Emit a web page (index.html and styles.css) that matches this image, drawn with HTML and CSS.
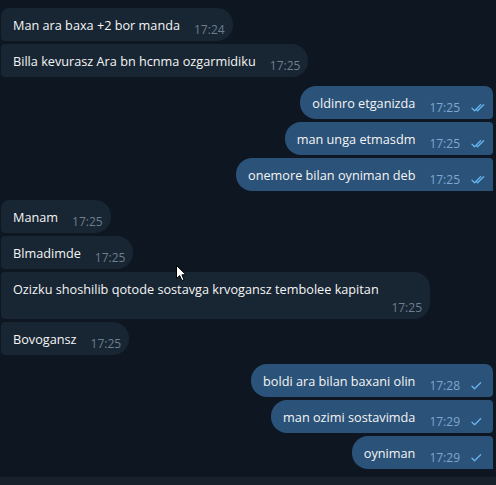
FILE: index.html
```html
<!DOCTYPE html>
<html lang="en">
<head>
  <meta charset="UTF-8">
  <meta name="viewport" content="width=device-width, initial-scale=1.0">
  <title>Chat</title>
  <link rel="stylesheet" href="styles.css">
</head>
<body>
  <main class="chat">
    <!-- incoming group -->
    <div class="group">
      <div class="msg in first"><span class="text">Man ara baxa +2 bor manda</span><span class="meta"><span class="time">17:24</span></span></div>
      <div class="msg in"><span class="text">Billa kevurasz Ara bn hcnma ozgarmidiku</span><span class="meta"><span class="time">17:25</span></span></div>
    </div>

    <!-- outgoing group -->
    <div class="group">
      <div class="msg out first"><span class="text">oldinro etganizda</span><span class="meta"><span class="time">17:25</span><svg class="check" viewBox="0 0 16 8"><path d="M1 4.2l2.6 2.6 6-6M5.4 5.6l1.2 1.2 6-6"/></svg></span></div>
      <div class="msg out"><span class="text">man unga etmasdm</span><span class="meta"><span class="time">17:25</span><svg class="check" viewBox="0 0 16 8"><path d="M1 4.2l2.6 2.6 6-6M5.4 5.6l1.2 1.2 6-6"/></svg></span></div>
      <div class="msg out last"><span class="text">onemore bilan oyniman deb</span><span class="meta"><span class="time">17:25</span><svg class="check" viewBox="0 0 16 8"><path d="M1 4.2l2.6 2.6 6-6M5.4 5.6l1.2 1.2 6-6"/></svg></span></div>
    </div>

    <!-- incoming group -->
    <div class="group">
      <div class="msg in first"><span class="text">Manam</span><span class="meta"><span class="time">17:25</span></span></div>
      <div class="msg in"><span class="text">Blmadimde</span><span class="meta"><span class="time">17:25</span></span></div>
      <div class="msg in long"><span class="text">Ozizku shoshilib qotode sostavga krvogansz tembolee kapitan</span><span class="meta"><span class="time">17:25</span></span></div>
      <div class="msg in"><span class="text">Bovogansz</span><span class="meta"><span class="time">17:25</span></span></div>
    </div>

    <!-- outgoing group -->
    <div class="group">
      <div class="msg out first"><span class="text">boldi ara bilan baxani olin</span><span class="meta"><span class="time">17:28</span><svg class="check" viewBox="0 0 16 8"><path d="M1 4.2l2.6 2.6 6-6"/></svg></span></div>
      <div class="msg out"><span class="text">man ozimi sostavimda</span><span class="meta"><span class="time">17:29</span><svg class="check" viewBox="0 0 16 8"><path d="M1 4.2l2.6 2.6 6-6"/></svg></span></div>
      <div class="msg out last"><span class="text">oyniman</span><span class="meta"><span class="time">17:29</span><svg class="check" viewBox="0 0 16 8"><path d="M1 4.2l2.6 2.6 6-6"/></svg></span></div>
    </div>

    <!-- mouse pointer -->
    <svg class="cursor" viewBox="0 0 12 18"><path d="M0.5 0.5V13.5L3.7 10.6 5.9 15.6 8 14.7 5.9 9.8H10Z"/></svg>
  </main>
  <footer class="composer"></footer>
</body>
</html>
```

FILE: styles.css
```css
/* General styles */
html, body {
  margin: 0;
  padding: 0;
  height: 100%;
}
body {
  font-family: "Open Sans", "Noto Sans", sans-serif;
  background-color: #0e1621;
  color: #f5f5f5;
  display: flex;
  flex-direction: column;
  overflow: hidden;
}
.chat {
  position: relative;
  height: 477px;
  padding: 8px 3px 0 1px;
  box-sizing: border-box;
  display: flex;
  flex-direction: column;
  gap: 9px;
}
.composer {
  flex: 1;
  background-color: #17212b;
}

/* Message groups */
.group {
  display: flex;
  flex-direction: column;
  gap: 3px;
}
.msg {
  display: flex;
  align-items: flex-end;
  gap: 14px;
  padding: 8px 8px 4px 12px;
  font-size: 12.7px;
  line-height: 18px;
}
.msg .text {
  margin-bottom: 3px;
  white-space: nowrap;
}
.meta {
  display: flex;
  align-items: center;
  gap: 11px;
  font-size: 12px;
  line-height: 14px;
}

/* Incoming */
.msg.in {
  align-self: flex-start;
  background-color: #182533;
  border-radius: 4px 16px 16px 4px;
}
.msg.in.first {
  border-top-left-radius: 8px;
}
.msg.in .time {
  color: #6d7f8f;
}
.msg.in.long {
  flex-direction: column;
  align-items: stretch;
  gap: 0;
  width: 429px;
  box-sizing: border-box;
}
.msg.in.long .text {
  margin-bottom: 0;
}
.msg.in.long .meta {
  align-self: flex-end;
  margin-top: 3px;
}

/* Outgoing */
.msg.out {
  align-self: flex-end;
  background-color: #2b5278;
  border-radius: 16px 4px 4px 16px;
  padding-right: 6px;
}
.msg.out.first {
  border-top-right-radius: 8px;
}
.msg.out.last {
  border-bottom-right-radius: 0;
}
.msg.out .time {
  color: #7da8d3;
}
.check {
  width: 16px;
  height: 8px;
  fill: none;
  stroke: #64b5ef;
  stroke-width: 1.3;
  stroke-linecap: round;
  stroke-linejoin: round;
}

/* Pointer over the chat */
.cursor {
  position: absolute;
  left: 176px;
  top: 265px;
  width: 12px;
  height: 18px;
  fill: #fff;
  stroke: #000;
  stroke-width: 1;
}
```
